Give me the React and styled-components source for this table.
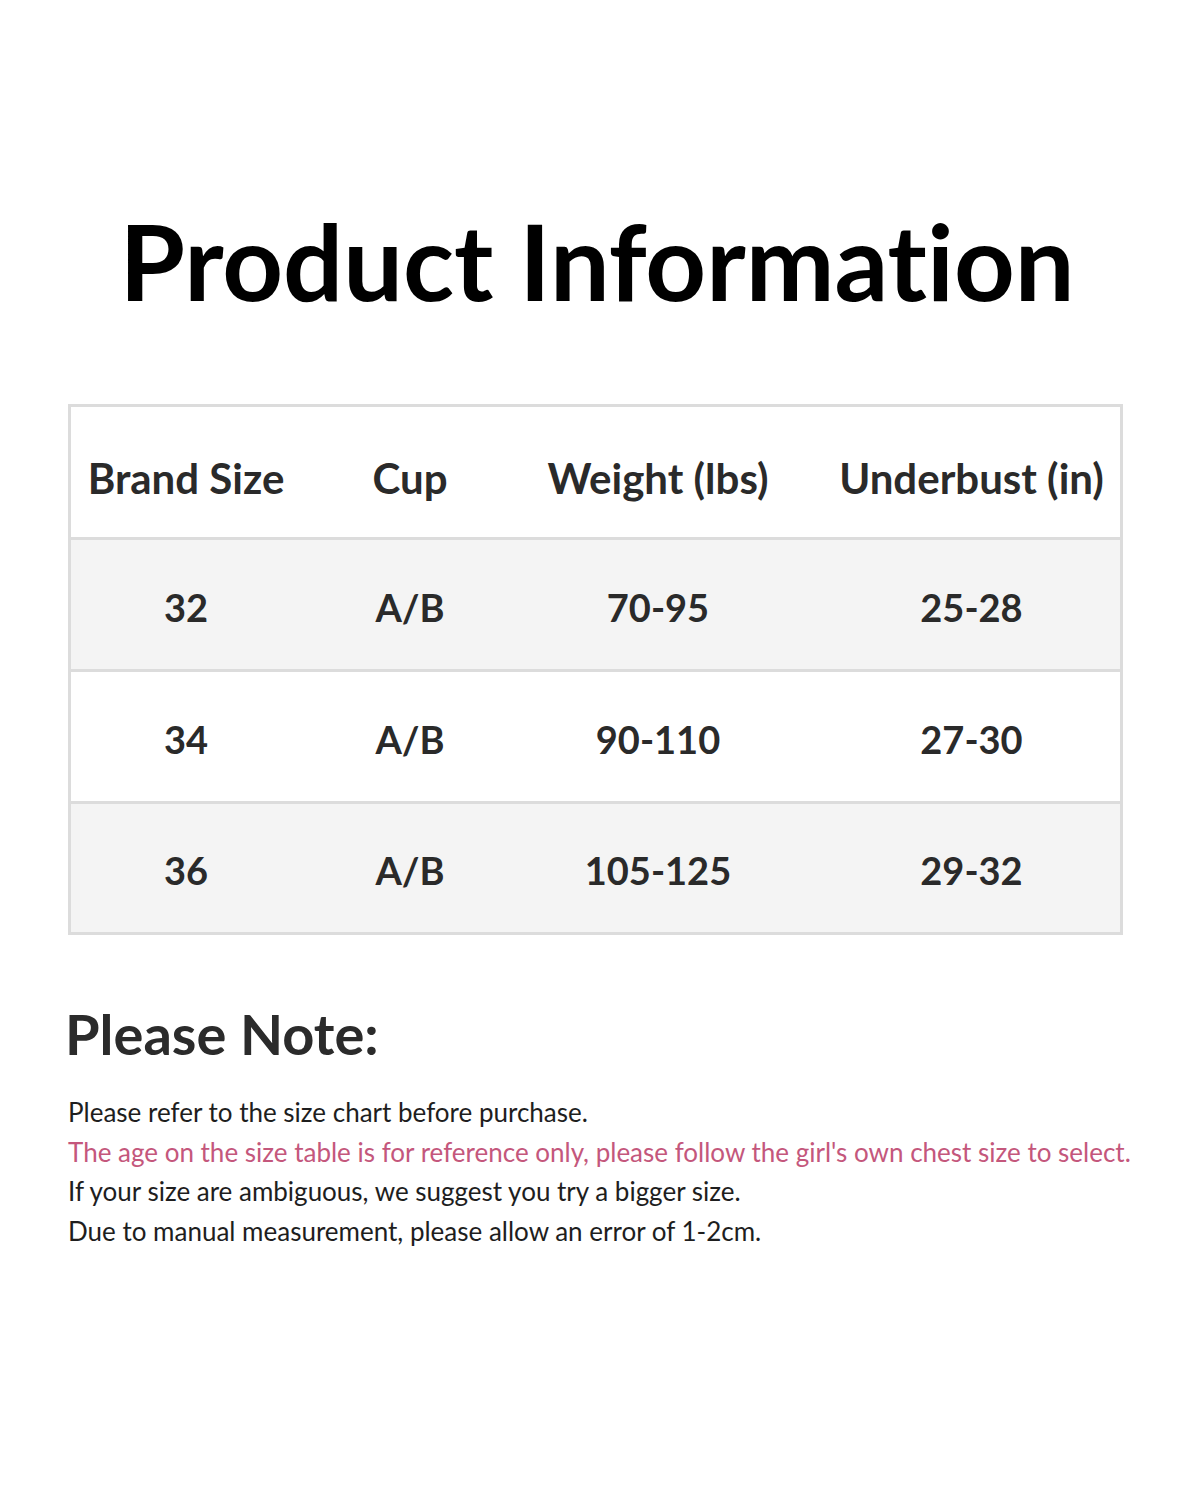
import React from 'react'
import styled, { createGlobalStyle } from 'styled-components'

const rows = [
  ['32', 'A/B', '70-95', '25-28'],
  ['34', 'A/B', '90-110', '27-30'],
  ['36', 'A/B', '105-125', '29-32'],
]

const notes = [
  { text: 'Please refer to the size chart before purchase.' },
  { text: "The age on the size table is for reference only, please follow the girl's own chest size to select.", pink: true },
  { text: 'If your size are ambiguous, we suggest you try a bigger size.' },
  { text: 'Due to manual measurement, please allow an error of 1-2cm.' },
]

const App = () => {
  return (
    <Page>
      <GlobalStyle />
      <Title>Product Information</Title>
      <Table>
        <HeadRow>
          <HeadCell>Brand Size</HeadCell>
          <HeadCell>Cup</HeadCell>
          <HeadCell>Weight (lbs)</HeadCell>
          <HeadCell>Underbust (in)</HeadCell>
        </HeadRow>
        {rows.map((r, i) => (
          <Row key={r[0]} $shaded={i % 2 === 0} $last={i === rows.length - 1}>
            {r.map((c, j) => (
              <Cell key={j}>{c}</Cell>
            ))}
          </Row>
        ))}
      </Table>
      <NoteTitle>Please Note:</NoteTitle>
      <Notes>
        {notes.map((n) => (
          <NoteLine key={n.text} $pink={n.pink}>{n.text}</NoteLine>
        ))}
      </Notes>
    </Page>
  )
}

export default App

const GlobalStyle = createGlobalStyle`
  body {
    margin: 0;
    background: #fff;
    font-family: Lato, "Noto Sans", sans-serif;
    font-variant-ligatures: none;
  }
`
const Page = styled.div`
  width: 1200px;
  height: 1500px;
  padding-top: 200px;
  box-sizing: border-box;
`
const Title = styled.h1`
  margin: 0 0 0 -6px;
  text-align: center;
  font-size: 106px;
  font-weight: 700;
  color: #000;
  line-height: 120px;
`
const Table = styled.div`
  margin: 84px 0 0 68px;
  width: 1055px;
  border: 3px solid #dcdcdc;
  box-sizing: border-box;
`
const HeadRow = styled.div`
  display: grid;
  grid-template-columns: 230px 218px 278px 1fr;
  height: 130px;
  border-bottom: 3px solid #dcdcdc;
  background: #fff;
  & > div:last-child { padding-left: 26px; }
`
const Row = styled.div`
  display: grid;
  grid-template-columns: 230px 218px 278px 1fr;
  height: ${(p) => (p.$last ? 128 : 129)}px;
  border-bottom: ${(p) => (p.$last ? 'none' : '3px solid #dcdcdc')};
  background: ${(p) => (p.$shaded ? '#f4f4f4' : '#fff')};
  & > div:last-child { padding-left: 26px; }
`
const HeadCell = styled.div`
  display: flex;
  align-items: center;
  justify-content: center;
  font-size: 42px;
  font-weight: 700;
  color: #2a2a2a;
  padding-top: 12px;
`
const Cell = styled.div`
  display: flex;
  align-items: center;
  justify-content: center;
  font-size: 38px;
  font-weight: 700;
  color: #2a2a2a;
  padding-top: 4px;
`
const NoteTitle = styled.h2`
  margin: 64px 0 0 65px;
  font-size: 56px;
  font-weight: 700;
  color: #2b2b2b;
  line-height: 70px;
`
const Notes = styled.div`
  margin: 24px 0 0 68px;
`
const NoteLine = styled.p`
  margin: 0;
  font-size: 26px;
  line-height: 39.5px;
  color: ${(p) => (p.$pink ? '#c4577c' : '#1e1e1e')};
`
